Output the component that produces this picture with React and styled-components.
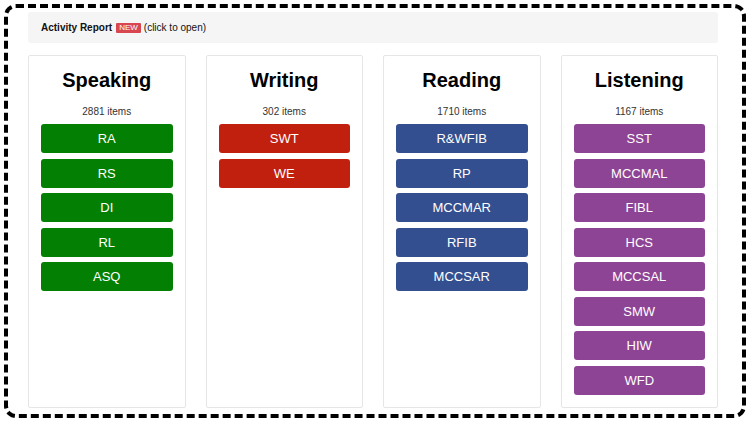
import React from 'react'
import styled, { createGlobalStyle } from 'styled-components'

const sections = [
  { title: 'Speaking', count: 2881, color: '#038003', items: ['RA', 'RS', 'DI', 'RL', 'ASQ'] },
  { title: 'Writing', count: 302, color: '#c2200f', items: ['SWT', 'WE'] },
  { title: 'Reading', count: 1710, color: '#344f8f', items: ['R&WFIB', 'RP', 'MCCMAR', 'RFIB', 'MCCSAR'] },
  { title: 'Listening', count: 1167, color: '#8e4494', items: ['SST', 'MCCMAL', 'FIBL', 'HCS', 'MCCSAL', 'SMW', 'HIW', 'WFD'] }
]

export default function App() {
  return (
    <>
      <GlobalStyle />
      <Frame>
        <ReportBar>
          <strong>Activity Report</strong> <NewBadge>NEW</NewBadge> (click to open)
        </ReportBar>
        <Columns>
          {sections.map(s => (
            <Card key={s.title}>
              <Title>{s.title}</Title>
              <Count>{s.count} items</Count>
              <ButtonList>
                {s.items.map(item => (
                  <TypeButton key={item} $color={s.color}>{item}</TypeButton>
                ))}
              </ButtonList>
            </Card>
          ))}
        </Columns>
      </Frame>
    </>
  )
}

const GlobalStyle = createGlobalStyle`
  html, body {
    margin: 0;
    padding: 0;
    background: #fff;
    font-family: "Liberation Sans", Arial, sans-serif;
  }
`
const Frame = styled.div`
  margin: 4px;
  height: 414px;
  box-sizing: border-box;
  border: 4px dashed #000;
  border-radius: 12px;
  padding: 4px 24px 6px 20px;
  display: flex;
  flex-direction: column;
`
const ReportBar = styled.div`
  height: 31px;
  background: #f5f5f5;
  border-radius: 3px;
  display: flex;
  align-items: center;
  gap: 3px;
  padding-left: 13px;
  font-size: 10px;
  color: #111;
  margin-bottom: 12px;
  strong {
    font-weight: bold;
  }
`
const NewBadge = styled.span`
  background: #d8474f;
  color: #fff;
  font-size: 8px;
  padding: 0 3px;
  line-height: 10px;
  border-radius: 1px;
  margin-left: 1px;
`
const Columns = styled.div`
  flex: 1;
  display: grid;
  grid-template-columns: repeat(4, 1fr);
  gap: 20px;
`
const Card = styled.div`
  border: 1px solid #e6e6e6;
  border-radius: 2px;
  padding: 11px 12px 11px;
  display: flex;
  flex-direction: column;
  align-items: stretch;
`
const Title = styled.h2`
  margin: 0;
  font-size: 20px;
  line-height: 27px;
  font-weight: bold;
  text-align: center;
  color: #000;
`
const Count = styled.p`
  margin: 12px 0 6px;
  font-size: 10px;
  line-height: 12px;
  color: #333;
  text-align: center;
`
const ButtonList = styled.div`
  display: flex;
  flex-direction: column;
  gap: 5.5px;
`
const TypeButton = styled.button`
  height: 29px;
  border: none;
  border-radius: 3px;
  background: ${p => p.$color};
  color: #fff;
  font-family: "Liberation Sans", Arial, sans-serif;
  font-size: 13px;
  cursor: pointer;
`
